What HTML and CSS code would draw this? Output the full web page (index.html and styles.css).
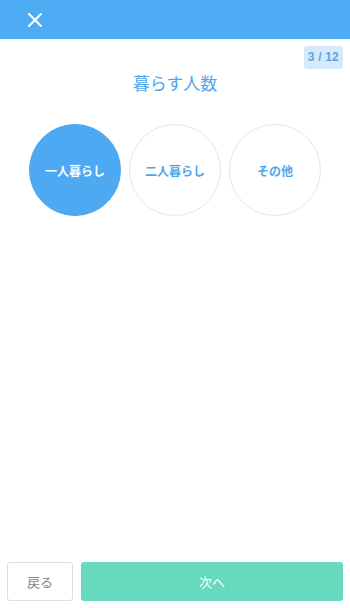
FILE: index.html
```html
<!DOCTYPE html>
<html lang="ja">
<head>
<meta charset="utf-8">
<title>暮らす人数</title>
<link rel="stylesheet" href="styles.css">
</head>
<body>
<header class="header">
  <button class="close" aria-label="閉じる">
    <svg width="14" height="14" viewBox="0 0 14 14"><path d="M1 1 L13 13 M13 1 L1 13" stroke="#fff" stroke-width="2" stroke-linecap="round" fill="none"/></svg>
  </button>
</header>
<main class="main">
  <div class="progress-row"><span class="progress">3 / 12</span></div>
  <h1 class="title">暮らす人数</h1>
  <div class="options">
    <div class="option selected">一人暮らし</div>
    <div class="option">二人暮らし</div>
    <div class="option">その他</div>
  </div>
</main>
<footer class="footer">
  <button class="btn back">戻る</button>
  <button class="btn next">次へ</button>
</footer>
</body>
</html>
```
FILE: styles.css
```css
* { box-sizing: border-box; }
html, body { height: 100%; }
body {
  margin: 0;
  display: flex;
  flex-direction: column;
  background: #fff;
  font-family: "Noto Sans CJK JP", "Liberation Sans", sans-serif;
}
.header {
  height: 39px;
  flex: none;
  background: #4eacf5;
  display: flex;
  align-items: center;
  padding-left: 28px;
}
.close {
  border: 0;
  background: none;
  padding: 0;
  width: 14px;
  height: 14px;
  display: block;
  margin-top: 1px;
}
.close svg { display: block; }
.main {
  flex: 1;
  padding-top: 7px;
}
.progress-row {
  display: flex;
  justify-content: flex-end;
  padding-right: 7px;
}
.progress {
  height: 23px;
  line-height: 23px;
  padding: 0 4px;
  background: #d6eafc;
  color: #56a6e6;
  font-family: "Liberation Sans", sans-serif;
  font-weight: bold;
  font-size: 12px;
  letter-spacing: 0.2px;
  border-radius: 3px;
}
.title {
  margin: 3px 0 0;
  text-align: center;
  font-size: 17px;
  line-height: 22px;
  font-weight: normal;
  color: #4ea6ea;
}
.options {
  margin-top: 30px;
  display: flex;
  justify-content: center;
  gap: 8px;
}
.option {
  width: 92px;
  height: 92px;
  border-radius: 50%;
  border: 1px solid #e6e6e6;
  display: flex;
  align-items: center;
  justify-content: center;
  font-size: 12px;
  font-weight: bold;
  color: #4ea6ea;
}
.option.selected {
  background: #4ea9f3;
  border-color: #4ea9f3;
  color: #fff;
}
.footer {
  flex: none;
  display: flex;
  gap: 8px;
  padding: 0 7px 7px;
}
.btn {
  height: 39px;
  border-radius: 3px;
  font-family: "Noto Sans CJK JP", sans-serif;
  font-size: 13px;
}
.back {
  width: 66px;
  background: #fff;
  border: 1px solid #dcdcdc;
  color: #888;
}
.next {
  flex: 1;
  background: #66d9bf;
  border: 0;
  color: #fff;
}
```
